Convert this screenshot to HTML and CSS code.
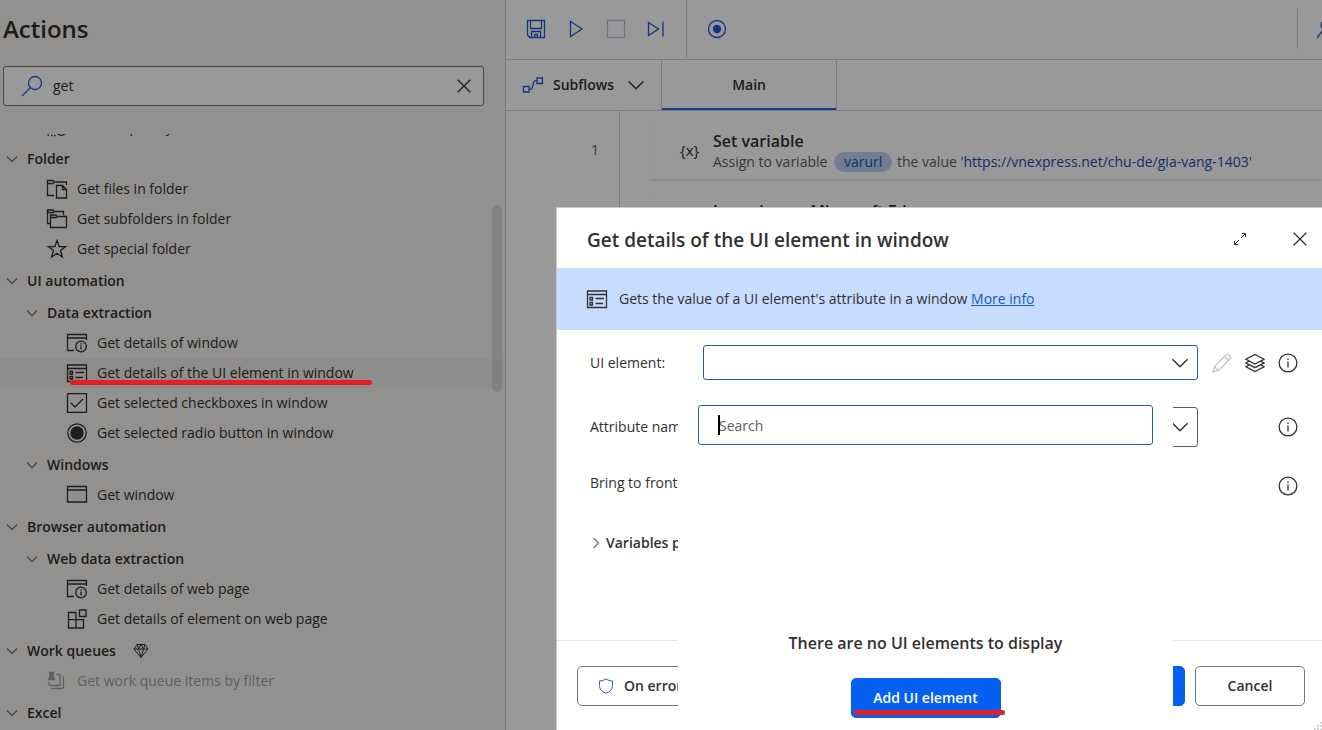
FILE: index.html
```
<!DOCTYPE html>
<html lang="en">
<head>
<meta charset="utf-8">
<title>Flow designer</title>
<link rel="stylesheet" href="styles.css">
</head>
<body>
<svg class="sprite" aria-hidden="true">
  <symbol id="chev" viewBox="0 0 12 12"><path d="M1 3.500 6 8.500 11 3.500"/></symbol>
  <symbol id="close" viewBox="0 0 14 14"><path d="M.7.700 13.300 13.300M13.300.7.700 13.300"/></symbol>
  <symbol id="files" viewBox="0 0 22 20"><path d="M8 16.500H1.500V1.500H7L8.500 3H20.500V6M1.500 4.500H7L8.500 3M10.500 6.500H16.500L20.500 10.500V19H10.500ZM16.500 6.500V10.500H20.500"/></symbol>
  <symbol id="subfolders" viewBox="0 0 22 20"><path d="M4 14.500H1.500V1H7L8.500 2.500H17.500V6M1.500 3.500H7L8.500 2.500M4.500 6H10L11.500 7.500H20.500V18.500H4.500ZM4.500 8.500H10L11.500 7.500"/></symbol>
  <symbol id="star" viewBox="0 0 22 20"><path d="M11 1.500 13.200 7.600H19.600L14.500 11.500 16.400 18 11 14.200 5.600 18 7.500 11.500 2.400 7.600H8.800Z"/></symbol>
  <symbol id="wininfo" viewBox="0 0 22 20"><path d="M8 17.500H1.500V1.500H20.500V7M1.500 5H20.500"/><circle cx="15" cy="13.500" r="5.300"/><path d="M15 12.500V16.500M15 10.300V11.500"/></symbol>
  <symbol id="form" viewBox="0 0 22 20"><path d="M1.500 2H20.500V18.500H1.500ZM1.500 5.500H20.500M4 8.500H6.500V11H4ZM4 13.500H6.500V16H4ZM9.500 9.500H18M9.500 14.500H17"/></symbol>
  <symbol id="check" viewBox="0 0 22 20"><path d="M1.500.7H20.500V19.300H1.500ZM5 10 9 14 17 6"/></symbol>
  <symbol id="radio" viewBox="0 0 22 20"><circle cx="11" cy="10" r="9.200"/><circle cx="11" cy="10" r="6" class="solid"/></symbol>
  <symbol id="window" viewBox="0 0 22 20"><path d="M1.500 1.500H20.500V17H1.500ZM1.500 5H20.500"/></symbol>
  <symbol id="blocks" viewBox="0 0 22 20"><path d="M2.500 3.500H10V10.700H17.500V19H2.500ZM2.500 10.700H10V19M13.500 1H20V7.500H13.500Z"/></symbol>
  <symbol id="queue" viewBox="0 0 22 20"><path class="solid" d="M3.500 1.500H7.500L6.800 4.500 8.500 8.500H2.500L4.200 4.500Z"/><path d="M3 11V13.500Q3 14.500 4 14.500H13Q14 14.500 14 13.500V4.500Q14 3.500 13 3.500H10.500M17.500 5.500V15.500Q17.500 17.500 15.500 17.500H5"/></symbol>
  <symbol id="clockfile" viewBox="0 0 22 20"><path d="M9 1.500H3V14M9 1.500H14V5"/><circle cx="15.500" cy="13.500" r="4.800"/><path d="M1.500 17.500 3 18.500M5 18.500H6.500M8 18.500H9.500"/></symbol>
  <symbol id="info" viewBox="0 0 20 20"><circle cx="10" cy="10" r="8.900"/><path d="M10 8.500V14.500M10 5.500V7"/></symbol>
</svg>

<div class="app">
  <aside class="actions">
    <h1 class="actions-title">Actions</h1>
    <div class="search">
      <svg class="search-icon" viewBox="0 0 22 22"><circle cx="14" cy="8" r="6.500"/><path d="M9.500 12.500 1 21"/></svg>
      <input class="search-input" type="text" value="get" aria-label="Search actions">
      <button class="bare" aria-label="Clear search"><svg class="i14"><use href="#close"/></svg></button>
    </div>
    <div class="list">
      <ul class="tree">
        <li class="item"><svg class="icon"><use href="#clockfile"/></svg>Get temporary file</li>
        <li class="group"><svg class="chev"><use href="#chev"/></svg>Folder</li>
        <li class="item"><svg class="icon"><use href="#files"/></svg>Get files in folder</li>
        <li class="item"><svg class="icon"><use href="#subfolders"/></svg>Get subfolders in folder</li>
        <li class="item"><svg class="icon"><use href="#star"/></svg>Get special folder</li>
        <li class="group"><svg class="chev"><use href="#chev"/></svg>UI automation</li>
        <li class="group nested"><svg class="chev"><use href="#chev"/></svg>Data extraction</li>
        <li class="item nested"><svg class="icon"><use href="#wininfo"/></svg>Get details of window</li>
        <li class="item nested selected"><svg class="icon"><use href="#form"/></svg>Get details of the UI element in window</li>
        <li class="item nested"><svg class="icon"><use href="#check"/></svg>Get selected checkboxes in window</li>
        <li class="item nested"><svg class="icon"><use href="#radio"/></svg>Get selected radio button in window</li>
        <li class="group nested"><svg class="chev"><use href="#chev"/></svg>Windows</li>
        <li class="item nested"><svg class="icon"><use href="#window"/></svg>Get window</li>
        <li class="group"><svg class="chev"><use href="#chev"/></svg>Browser automation</li>
        <li class="group nested"><svg class="chev"><use href="#chev"/></svg>Web data extraction</li>
        <li class="item nested"><svg class="icon"><use href="#wininfo"/></svg>Get details of web page</li>
        <li class="item nested"><svg class="icon"><use href="#blocks"/></svg>Get details of element on web page</li>
        <li class="group"><svg class="chev"><use href="#chev"/></svg>Work queues
          <svg class="gem" viewBox="0 0 16 16"><path d="M4 1.500H12L15 6 8 14.500 1 6ZM1 6H15M4 1.500 5.500 6 8 14.500 10.500 6 12 1.500M5.500 6 8 1.500 10.500 6"/></svg></li>
        <li class="item disabled"><svg class="icon"><use href="#queue"/></svg>Get work queue items by filter</li>
        <li class="group"><svg class="chev"><use href="#chev"/></svg>Excel</li>
      </ul>
      <div class="scroll-thumb"></div>
    </div>
  </aside>

  <main class="designer">
    <div class="toolbar">
      <div class="tools">
        <button class="bare" aria-label="Save"><svg class="i20" viewBox="0 0 20 20"><path d="M1.500 1.500H18.500V18.500H4L1.500 16ZM4.500 1.500V9.500H15.500V1.500M5.500 18.500V12.500H14.500V18.500M8.500 18.500V15.500H11.500V18.500"/></svg></button>
        <button class="bare" aria-label="Run"><svg class="i20" viewBox="0 0 20 20"><path d="M4.500 2.500 16 10 4.500 17.500Z"/></svg></button>
        <button class="bare faded" aria-label="Stop"><svg class="i20" viewBox="0 0 20 20"><path d="M1.500 1.500H18.500V18.500H1.500Z"/></svg></button>
        <button class="bare" aria-label="Run next action"><svg class="i20" viewBox="0 0 20 20"><path d="M2.500 3.500 12.500 10 2.500 16.500ZM17 2.500V17.500"/></svg></button>
      </div>
      <div class="record"><button class="bare" aria-label="Recorder"><svg class="i20" viewBox="0 0 20 20"><circle cx="10" cy="10" r="8.500"/><circle class="solid" cx="10" cy="10" r="3.500"/></svg></button></div>
      <div class="account"><svg class="i20" viewBox="0 0 20 20"><circle cx="10" cy="6" r="5"/><path d="M1 19 7 11"/></svg></div>
    </div>
    <div class="tabs">
      <button class="subflows"><svg class="flow" viewBox="0 0 22 20"><path d="M1.500 11.500H7V17H1.500ZM15 3H20.500V8.500H15ZM7 14.300H8.500Q10 14.300 10.500 12L11.500 8Q12 5.700 13.500 5.700H15"/></svg>Subflows<svg class="chev-lg"><use href="#chev"/></svg></button>
      <button class="tab">Main</button>
    </div>
    <div class="canvas">
      <div class="gutter">1</div>
      <div class="steps">
        <div class="card">
          <span class="card-icon">{x}</span>
          <div>
            <div class="card-title">Set variable</div>
            <div class="card-text">Assign to variable <span class="pill">varurl</span> the value <span class="value">'https://vnexpress.net/chu-de/gia-vang-1403'</span></div>
          </div>
        </div>
        <div class="card">
          <span class="card-icon"></span>
          <div>
            <div class="card-title">Launch new Microsoft Edge</div>
            <div class="card-text">&nbsp;</div>
          </div>
        </div>
      </div>
    </div>
  </main>

  <div class="dim"></div>
  <div class="mark mark-action"></div>

  <section class="dialog" role="dialog" aria-labelledby="dlg-title">
    <header class="dlg-head">
      <h2 class="dlg-title" id="dlg-title">Get details of the UI element in window</h2>
      <button class="bare" aria-label="Expand"><svg class="i14 thin" viewBox="0 0 14 14"><path d="M8 6 12.500 1.500M9 1.500H12.500V5M6 8 1.500 12.500M1.500 9V12.500H5"/></svg></button>
      <button class="bare dlg-close" aria-label="Close"><svg class="i14"><use href="#close"/></svg></button>
    </header>
    <div class="banner">
      <svg class="icon"><use href="#form"/></svg>
      <p class="banner-text">Gets the value of a UI element's attribute in a window <a class="more" href="#">More info</a></p>
    </div>
    <div class="form">
      <div class="row">
        <label for="ui-element">UI element:</label>
        <div class="combo active"><input id="ui-element" class="combo-input" type="text"><svg class="chev-lg"><use href="#chev"/></svg></div>
        <div class="row-tools">
          <button class="bare pencil" aria-label="Edit" disabled><svg class="i20" viewBox="0 0 20 20"><path d="M1 19 2.500 13.500 14 2Q15.500.5 17.500 2.500T18 6L6.500 17.500ZM2.500 13.500 6.500 17.500M12.500 3.500 16.500 7.500"/></svg></button>
          <button class="bare" aria-label="UI elements"><svg class="i20" viewBox="0 0 20 20"><path d="M10 1.500 19 6.200 10 11 1 6.200ZM4 8.200 1 10 10 14.700 19 10 16 8.200M4 12 1 13.700 10 18.500 19 13.700 16 12"/></svg></button>
          <button class="bare" aria-label="Help"><svg class="i20"><use href="#info"/></svg></button>
        </div>
      </div>
      <div class="row tall">
        <label for="attribute">Attribute name:</label>
        <div class="combo"><input id="attribute" class="combo-input" type="text"><svg class="chev-lg"><use href="#chev"/></svg></div>
        <div class="row-tools"><button class="bare" aria-label="Help"><svg class="i20"><use href="#info"/></svg></button></div>
      </div>
      <div class="row tall toggle">
        <span class="row-label">Bring to front:</span>
        <span></span>
        <div class="row-tools"><button class="bare" aria-label="Help"><svg class="i20"><use href="#info"/></svg></button></div>
      </div>
      <button class="variables"><svg class="chev right"><use href="#chev"/></svg>Variables produced</button>
    </div>
    <footer class="dlg-foot">
      <button class="btn on-error"><svg class="shield" viewBox="0 0 16 16"><path d="M8 1Q11 3 14.500 3V7.500Q14.500 13 8 15.300Q1.500 13 1.500 7.500V3Q5 3 8 1Z"/></svg>On error</button>
      <button class="btn primary save">Save</button>
      <button class="btn cancel">Cancel</button>
    </footer>

    <div class="popup">
      <input class="popup-search" type="text" placeholder="Search" aria-label="Search UI elements">
      <span class="caret"></span>
      <div class="empty">
        <p class="empty-text">There are no UI elements to display</p>
        <button class="btn primary add">Add UI element</button>
      </div>
      <div class="mark mark-add"></div>
    </div>
    <svg class="grip" viewBox="0 0 10 10"><path d="M8 0H10V2H8ZM4 4H6V6H4ZM8 4H10V6H8ZM0 8H2V10H0ZM4 8H6V10H4ZM8 8H10V10H8Z"/></svg>
  </section>
</div>
</body>
</html>
```
FILE: styles.css
```
* { box-sizing: border-box; }

body {
  margin: 0;
  overflow: hidden;
  font: 14px/20px "Open Sans", "Noto Sans", sans-serif;
  color: #323130;
}

h1, h2, p, ul { margin: 0; padding: 0; }

button, input { font: inherit; color: inherit; }

svg { flex: none; fill: none; stroke: currentColor; stroke-width: 1.3; }

.sprite { position: absolute; width: 0; height: 0; }
.solid { fill: currentColor; }
.i14 { width: 14px; height: 14px; }
.i20 { width: 20px; height: 20px; }
.icon { width: 22px; height: 20px; }
.chev { width: 12px; height: 12px; color: #797775; }
.chev-lg { width: 18px; height: 18px; stroke-width: 1; }
.thin { stroke-width: 1; }

.bare {
  display: flex;
  padding: 0;
  border: 0;
  background: none;
}

.app {
  position: relative;
  display: flex;
  height: 100vh;
  background: #fff;
  overflow: hidden;
}

/* Actions panel */
.actions {
  display: flex;
  flex-direction: column;
  flex: none;
  width: 506px;
  background: #f3f2f1;
  border-right: 1px solid #d2d0ce;
}

.actions-title {
  padding: 13px 3px 21px;
  font-size: 24px;
  line-height: 32px;
  font-weight: 600;
}

.search {
  display: flex;
  align-items: center;
  flex: none;
  height: 40px;
  margin: 0 21px 0 3px;
  padding: 0 12px 0 17px;
  background: #fff;
  border: 1px solid #797775;
  border-radius: 3px;
}

.search-icon { width: 22px; height: 22px; color: #3a56d8; }

.search-input {
  flex: 1;
  min-width: 0;
  padding: 0 10px;
  border: 0;
  background: none;
  outline: 0;
}

.list {
  position: relative;
  flex: 1;
  min-height: 0;
  margin-top: 28px;
  overflow: hidden;
}

.tree { margin-top: -22px; list-style: none; }

.group, .item { display: flex; align-items: center; }

.group {
  gap: 9px;
  height: 32px;
  padding: 2px 0 0 6px;
  font-weight: 600;
}

.group.nested { padding-left: 26px; }

.item { gap: 9px; height: 30px; padding-left: 46px; }
.item.nested { padding-left: 66px; }
.item.selected { background: #edebe9; }
.item.disabled { color: #a19f9d; }

.gem { width: 16px; height: 16px; margin-left: 8px; stroke-width: 1; }

.scroll-thumb {
  position: absolute;
  top: 71px;
  right: 3px;
  width: 10px;
  height: 187px;
  border-radius: 5px;
  background: #dad8d7;
}

/* Designer */
.designer {
  flex: 1;
  display: flex;
  flex-direction: column;
  min-width: 0;
}

.toolbar {
  display: flex;
  align-items: center;
  height: 60px;
  padding-bottom: 1px;
  border-bottom: 1px solid #d2d0ce;
  color: #2457d6;
}

.tools {
  display: flex;
  align-items: center;
  gap: 20px;
  height: 100%;
  padding: 0 20px;
  border-right: 1px solid #d2d0ce;
}

.faded { color: #b4c2e4; }
.record { padding: 0 20px; }

.account {
  display: flex;
  align-items: center;
  height: 40px;
  width: 25px;
  margin-left: auto;
  padding-left: 18px;
  border-left: 1px solid #d2d0ce;
  overflow: hidden;
}

.tabs {
  display: flex;
  height: 51px;
  border-bottom: 1px solid #d2d0ce;
}

.subflows, .tab {
  padding: 0;
  border: 0;
  border-right: 1px solid #d2d0ce;
  background: none;
  font-weight: 600;
}

.subflows {
  display: flex;
  align-items: center;
  gap: 9px;
  padding: 0 16px;
}

.subflows .chev-lg { margin-left: 4px; }
.flow { width: 22px; height: 20px; color: #2457d6; }

.tab {
  width: 175px;
  box-shadow: inset 0 -2px #2266e3;
}

.canvas { flex: 1; display: flex; min-height: 0; }

.gutter {
  width: 114px;
  padding: 29px 20px 0 0;
  border-right: 1px solid #d2d0ce;
  text-align: right;
  color: #605e5c;
}

.steps {
  flex: 1;
  display: flex;
  flex-direction: column;
  gap: 12px;
  min-width: 0;
  padding: 10px 0 0 30px;
}

.card {
  display: flex;
  flex: none;
  height: 58px;
  padding: 9px 0 0 30px;
  box-shadow: 0 2px 2px -1px rgba(0, 0, 0, .16);
}

.card-icon { width: 33px; font-size: 15px; line-height: 40px; }
.card-title { font-size: 16px; line-height: 22px; font-weight: 600; }
.card-text { line-height: 20px; color: #605e5c; white-space: nowrap; }

.pill {
  display: inline-block;
  margin: 0 1px 0 3px;
  padding: 0 10px;
  border-radius: 10px;
  background: #b9d3f5;
  color: #1f57a8;
}

.value { color: #1f4eb0; }

.dim {
  position: absolute;
  inset: 0;
  background: rgba(0, 0, 0, .4);
}

/* Red underlines drawn over the page */
.mark {
  position: absolute;
  height: 5px;
  border-radius: 3px;
  background: #e32024;
}

.mark-action { left: 70px; top: 380px; width: 302px; }
.mark-add { left: 176px; top: 325px; width: 151px; }

/* Dialog */
.dialog {
  position: absolute;
  left: 556px;
  right: 0;
  top: 207px;
  bottom: 0;
  display: flex;
  flex-direction: column;
  background: #fff;
  border: 1px solid #c8c8c8;
  border-width: 1px 0 0 1px;
}

.dlg-head {
  display: flex;
  align-items: center;
  height: 60px;
  padding: 2px 15px 0 30px;
}

.dlg-title {
  flex: 1;
  padding-top: 2px;
  font-size: 19px;
  line-height: 28px;
  font-weight: 600;
}

.dlg-close { margin-left: 46px; }

.banner {
  display: flex;
  align-items: center;
  gap: 11px;
  height: 62px;
  padding-left: 29px;
  background: #c7dcff;
}

.more { color: #0f5bd0; }

.form { flex: 1; padding: 15px 0 0 33px; }

.row {
  display: grid;
  grid-template-columns: 113px 1fr 124px;
  align-items: center;
  height: 35px;
  margin-bottom: 27px;
  white-space: nowrap;
}

.row.tall { height: 40px; margin-bottom: 19px; }
.row.toggle { margin-bottom: 27px; }
.row-label { padding-bottom: 6px; }

.combo {
  display: flex;
  align-items: center;
  height: 100%;
  padding-right: 8px;
  border: 1px solid #605e5c;
  border-radius: 3px;
}

.combo.active { border-color: #1d5fa8; }

.combo-input {
  flex: 1;
  min-width: 0;
  border: 0;
  outline: 0;
  background: none;
}

.row-tools {
  display: flex;
  justify-content: flex-end;
  gap: 13px;
  padding-right: 24px;
}

.pencil { color: #c8c6c4; }

.variables {
  display: flex;
  align-items: center;
  gap: 4px;
  padding: 0;
  border: 0;
  background: none;
  font-weight: 600;
}

.right { transform: rotate(-90deg); }

.dlg-foot {
  display: flex;
  gap: 10px;
  height: 90px;
  padding: 25px 17px 0 20px;
  border-top: 1px solid #e6e6e6;
}

.btn {
  height: 40px;
  padding: 0 20px;
  border: 1px solid #797775;
  border-radius: 5px;
  background: #fff;
  font-weight: 600;
}

.on-error { display: flex; align-items: center; gap: 10px; }
.shield { width: 16px; height: 16px; color: #3558e0; stroke-width: 1; }
.save { width: 110px; margin-left: auto; }
.cancel { width: 110px; }

.btn.primary {
  border-color: #0560f2;
  background: #0560f2;
  color: #fff;
}

.popup {
  position: absolute;
  left: 121px;
  right: 149px;
  top: 177px;
  bottom: 0;
  display: flex;
  flex-direction: column;
  padding: 20px 20px 12px;
  background: #fff;
}

.popup-search {
  width: 100%;
  height: 40px;
  padding: 0 20px;
  border: 1px solid #1d5fa8;
  border-radius: 3px;
  outline: 0;
}

.popup-search::placeholder { color: #605e5c; opacity: 1; }

.caret {
  position: absolute;
  left: 40px;
  top: 30px;
  width: 2px;
  height: 20px;
  background: #000;
}

.empty {
  flex: 1;
  display: flex;
  flex-direction: column;
  align-items: center;
  justify-content: flex-end;
  gap: 24px;
}

.empty-text { font-size: 16px; line-height: 22px; font-weight: 600; }
.add { width: 150px; }

.grip {
  position: absolute;
  right: 0;
  bottom: 0;
  width: 8px;
  height: 8px;
  fill: #b9bfc9;
  stroke: none;
}
```
